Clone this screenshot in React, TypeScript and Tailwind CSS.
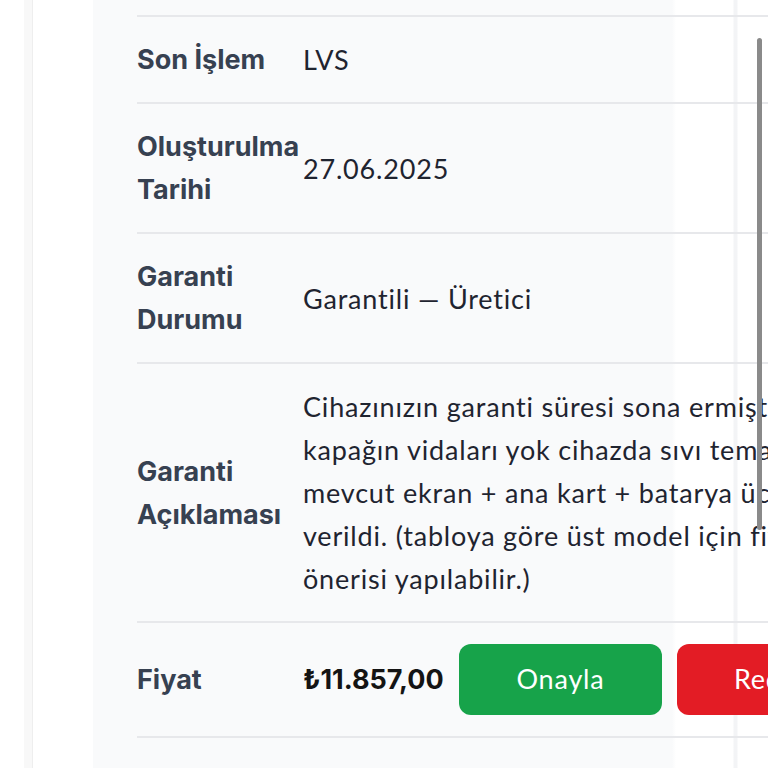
// Order detail table — partial view of a scrolled modal.
// Left rail, gray-50 panel, label/value rows, price row with actions.

const FONT_LABEL = "Inter, 'Noto Sans', sans-serif";
const FONT_VALUE = "Lato, 'Noto Sans', sans-serif";

type Row = { label: string[]; value: React.ReactNode };

const NOTE_LINES = [
  "Cihazınızın garanti süresi sona ermiştir. Arka",
  "kapağın vidaları yok cihazda sıvı teması tespit",
  "mevcut ekran + ana kart + batarya ücreti",
  "verildi. (tabloya göre üst model için fiyat",
  "önerisi yapılabilir.)",
];

const rows: Row[] = [
  { label: ["Son İşlem"], value: "LVS" },
  { label: ["Oluşturulma", "Tarihi"], value: "27.06.2025" },
  { label: ["Garanti", "Durumu"], value: "Garantili — Üretici" },
  {
    label: ["Garanti", "Açıklaması"],
    value: (
      <div className="flex flex-col">
        {NOTE_LINES.map((l) => (
          <span key={l} className="whitespace-nowrap">
            {l}
          </span>
        ))}
      </div>
    ),
  },
];

function Label({ lines }: { lines: string[] }) {
  return (
    <div
      className="w-[166px] shrink-0 flex flex-col text-[27px] leading-[43px] font-bold text-[#374151]"
      style={{ fontFamily: FONT_LABEL }}
    >
      {lines.map((l) => (
        <span key={l} className="whitespace-nowrap">
          {l}
        </span>
      ))}
    </div>
  );
}

export default function App() {
  return (
    <div className="relative w-[768px] h-[768px] overflow-hidden bg-white flex">
      {/* left rail */}
      <div className="w-[93px] shrink-0 flex">
        <div className="w-[24px]" />
        <div className="w-[9px] bg-[#f8f8f8] border-r border-[#eeeeee]" />
      </div>

      {/* panel */}
      <div className="flex-1 min-w-0 bg-[linear-gradient(to_right,#f9fafb_0,#f9fafb_579px,#ffffff_583px,#ffffff_640px,#f3f4f6_641px,#f3f4f6_644px,#ffffff_645px)]">
        <div className="pl-[44px] pt-[15px]">
          {rows.map((r) => (
            <div
              key={r.label.join(" ")}
              className="flex items-center border-t-2 border-[#e7e8eb] py-[21px]"
            >
              <Label lines={r.label} />
              <div
                className="flex-1 text-[27px] leading-[43px] tracking-[0.03em] text-[#1f2430] whitespace-nowrap"
                style={{ fontFamily: FONT_VALUE }}
              >
                {r.value}
              </div>
            </div>
          ))}

          {/* price row */}
          <div className="flex items-center border-y-2 border-[#e7e8eb] py-[21px]">
            <Label lines={["Fiyat"]} />
            <div className="flex items-center gap-[15px] whitespace-nowrap">
              <span
                className="w-[141px] text-[27px] leading-[43px] font-bold text-[#141414]"
                style={{ fontFamily: FONT_LABEL }}
              >
                ₺11.857,00
              </span>
              <button
                className="w-[203px] h-[71px] shrink-0 rounded-[12px] bg-[#17a34a] text-white text-[27px] tracking-[0.03em]"
                style={{ fontFamily: FONT_VALUE }}
              >
                Onayla
              </button>
              <button
                className="w-[203px] h-[71px] shrink-0 rounded-[12px] bg-[#e31c25] text-white text-[27px] tracking-[0.03em]"
                style={{ fontFamily: FONT_VALUE }}
              >
                Reddet
              </button>
            </div>
          </div>
        </div>
      </div>

      {/* scrollbar thumb */}
      <div className="absolute left-[757px] top-[38px] w-[5px] h-[492px] rounded-full bg-[#8a8a8a]" />
    </div>
  );
}
